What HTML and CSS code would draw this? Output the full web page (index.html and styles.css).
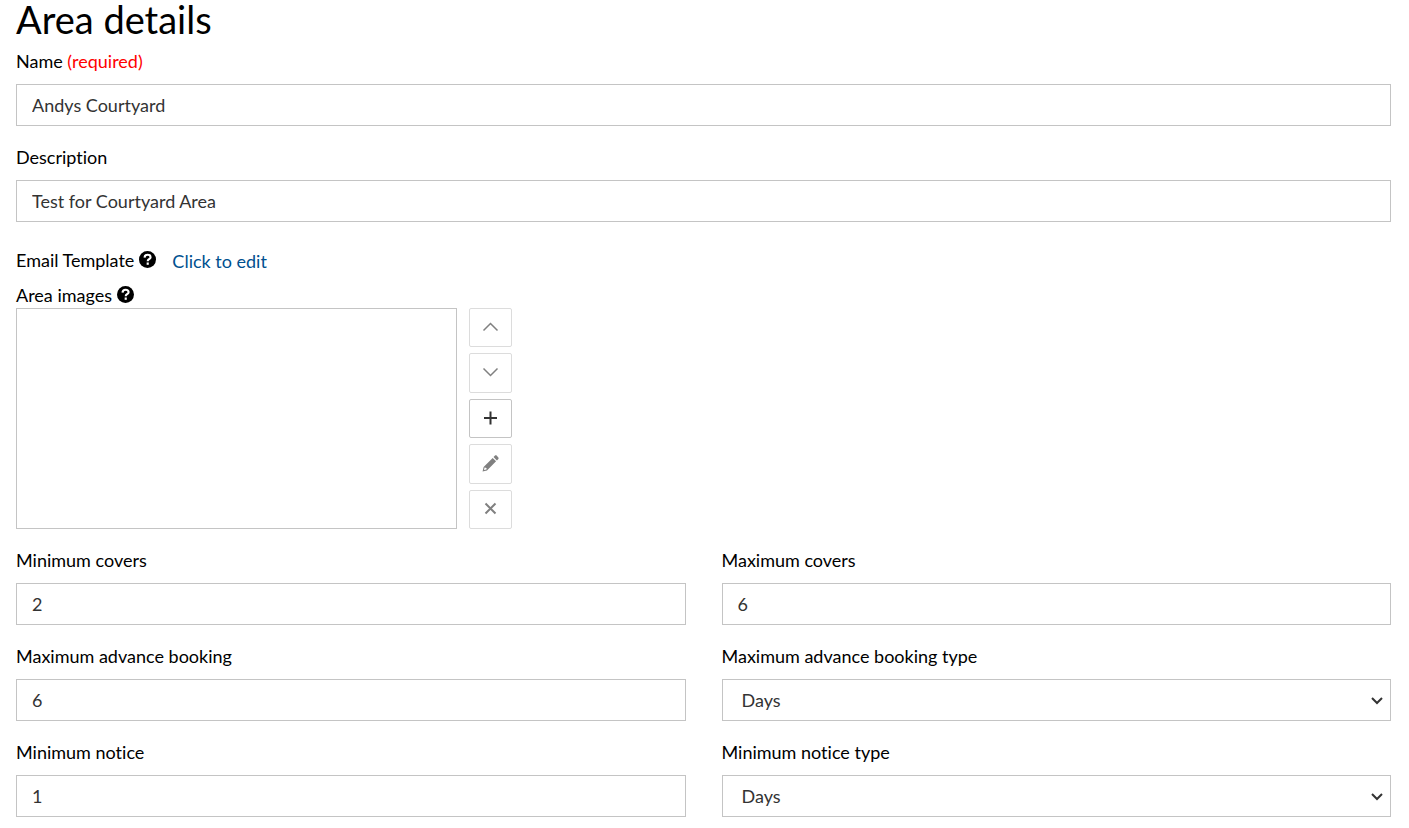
FILE: index.html
```html
<!DOCTYPE html>
<html lang="en">
<head>
    <meta charset="UTF-8">
    <meta name="viewport" content="width=device-width, initial-scale=1.0">
    <title>Area details</title>
    <link rel="stylesheet" href="styles.css">
</head>
<body>
    <form class="area-form">
        <h1>Area details</h1>
        <div class="form-group">
            <label for="name">Name <span class="required">(required)</span></label>
            <input type="text" id="name" value="Andys Courtyard" required>
        </div>
        <div class="form-group">
            <label for="description">Description</label>
            <input type="text" id="description" value="Test for Courtyard Area">
        </div>

        <div class="template-row">
            <span class="field-title">Email Template
                <svg class="help" viewBox="0 0 16 16"><circle cx="8" cy="8" r="8"/><path d="M5.2 6.200C5.300 4.400 6.400 3.500 8 3.500c1.700 0 2.900.9 2.900 2.300 0 2-2.700 1.900-2.700 3.800"/><path d="M8.200 10.800v2.200"/></svg>
            </span>
            <a href="#">Click to edit</a>
        </div>

        <label class="field-title" for="images">Area images
            <svg class="help" viewBox="0 0 16 16"><circle cx="8" cy="8" r="8"/><path d="M5.2 6.200C5.300 4.400 6.400 3.500 8 3.500c1.700 0 2.900.9 2.900 2.300 0 2-2.700 1.900-2.700 3.800"/><path d="M8.200 10.800v2.200"/></svg>
        </label>
        <div class="images">
            <select class="image-list" id="images" size="5"></select>
            <div class="image-buttons">
                <button type="button" aria-label="Move up" disabled>
                    <svg viewBox="0 0 17 17"><path class="line" d="M1.500 11.500l7-7 7 7"/></svg>
                </button>
                <button type="button" aria-label="Move down" disabled>
                    <svg viewBox="0 0 17 17"><path class="line" d="M1.500 4.500l7 7 7-7"/></svg>
                </button>
                <button type="button" aria-label="Add">
                    <svg viewBox="0 0 17 17"><path class="line thick" d="M8.500 1.500v13M2 8h13"/></svg>
                </button>
                <button type="button" aria-label="Edit" disabled>
                    <svg viewBox="0 0 18 18"><path d="M12.200 2.200l1.300-1.300c.7-.7 1.500-.7 2.200 0l1.400 1.400c.7.7.7 1.500 0 2.200l-1.300 1.300zM11.300 3.100l3.600 3.600L5.300 16.300l-4.700 1.100 1.100-4.700zM2.700 13.300l-.6 2.600 2.600-.6.200-1.400-.9-.4z" fill-rule="evenodd"/></svg>
                </button>
                <button type="button" aria-label="Remove" disabled>
                    <svg viewBox="0 0 17 17"><path class="line thick" d="M3.500 3.500l10 10M13.500 3.500l-10 10"/></svg>
                </button>
            </div>
        </div>

        <div class="columns">
            <div class="form-group">
                <label for="minCovers">Minimum covers</label>
                <input type="text" id="minCovers" value="2">
            </div>
            <div class="form-group">
                <label for="maxCovers">Maximum covers</label>
                <input type="text" id="maxCovers" value="6">
            </div>
            <div class="form-group">
                <label for="maxAdvance">Maximum advance booking</label>
                <input type="text" id="maxAdvance" value="6">
            </div>
            <div class="form-group">
                <label for="maxAdvanceType">Maximum advance booking type</label>
                <div class="select-box">
                    <select id="maxAdvanceType">
                        <option>Days</option>
                    </select>
                    <svg class="arrow" viewBox="0 0 12 8"><path d="M1 1l5 5 5-5"/></svg>
                </div>
            </div>
            <div class="form-group">
                <label for="minNotice">Minimum notice</label>
                <input type="text" id="minNotice" value="1">
            </div>
            <div class="form-group">
                <label for="minNoticeType">Minimum notice type</label>
                <div class="select-box">
                    <select id="minNoticeType">
                        <option>Days</option>
                    </select>
                    <svg class="arrow" viewBox="0 0 12 8"><path d="M1 1l5 5 5-5"/></svg>
                </div>
            </div>
        </div>
    </form>
</body>
</html>
```
FILE: styles.css
```css
* {
    box-sizing: border-box;
}
body {
    margin: 0;
    font-family: Lato, sans-serif;
    font-size: 18px;
    font-variant-ligatures: none;
    line-height: 22px;
    color: #000;
    background-color: #fff;
}
.area-form {
    padding: 0 18px 0 16px;
}
h1 {
    margin: 0 0 12px;
    font-size: 38px;
    font-weight: 400;
    line-height: 38px;
}
.form-group {
    margin-bottom: 20px;
}
.form-group label {
    display: block;
    margin-bottom: 12px;
}
.required {
    color: #f00;
}
.form-group input, .form-group select {
    display: block;
    width: 100%;
    height: 42px;
    padding: 0 15px 1px;
    border: 1px solid #c4c4c4;
    border-radius: 0;
    background-color: #fff;
    color: #333;
    font: inherit;
}
.form-group select {
    appearance: none;
    padding: 0 30px 1px 19px;
}
.select-box {
    position: relative;
}
.arrow {
    position: absolute;
    top: 18px;
    right: 8px;
    width: 12px;
    height: 8px;
    fill: none;
    stroke: #333;
    stroke-width: 2;
    pointer-events: none;
}
.template-row {
    display: flex;
    gap: 16px;
    padding-top: 5px;
    margin-bottom: 9px;
}
.template-row a {
    padding-top: 3px;
    color: #00508f;
    text-decoration: none;
}
.field-title {
    display: flex;
    align-items: center;
    gap: 5px;
    height: 26px;
    padding-bottom: 1px;
}
.help {
    width: 17px;
    height: 17px;
}
.help path {
    fill: none;
    stroke: #fff;
    stroke-width: 2;
}
.images {
    display: flex;
    gap: 12px;
    height: 221px;
    margin-bottom: 20px;
}
.image-list {
    width: 441px;
    border: 1px solid #c4c4c4;
    border-radius: 0;
    background-color: #fff;
    font: inherit;
}
.image-buttons {
    display: flex;
    flex-direction: column;
    gap: 6px;
    width: 43px;
}
.image-buttons button {
    display: flex;
    flex: 1;
    align-items: center;
    justify-content: center;
    padding: 0 0 1px;
    border: 1px solid #c4c4c4;
    border-radius: 2px;
    background-color: #fff;
    color: #333;
}
.image-buttons button:disabled {
    border-color: #dcdcdc;
    color: #808080;
}
.image-buttons svg {
    width: 17px;
    height: 17px;
    fill: currentColor;
}
.image-buttons .line {
    fill: none;
    stroke: currentColor;
    stroke-width: 1.5;
}
.image-buttons .thick {
    stroke-width: 2;
}
.columns {
    display: grid;
    grid-template-columns: 1fr 1fr;
    column-gap: 36px;
}
.columns .form-group:nth-last-child(-n+2) {
    margin-bottom: 12px;
}
```
